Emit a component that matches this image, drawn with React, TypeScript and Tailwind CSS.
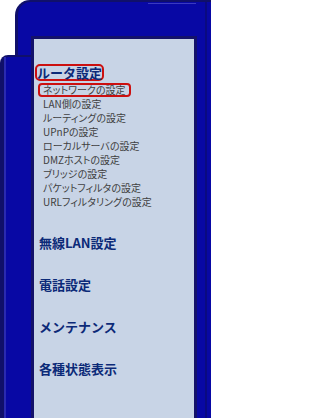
const subItems = [
  'ネットワークの設定',
  'LAN側の設定',
  'ルーティングの設定',
  'UPnPの設定',
  'ローカルサーバの設定',
  'DMZホストの設定',
  'ブリッジの設定',
  'パケットフィルタの設定',
  'URLフィルタリングの設定',
];

const sections = ['無線LAN設定', '電話設定', 'メンテナンス', '各種状態表示'];

const font = { fontFamily: '"Noto Sans CJK JP", "Noto Sans", sans-serif' };
const palt = { fontFeatureSettings: '"palt"' };

export default function App() {
  return (
    <div className="w-[211px] h-[418px] bg-white flex flex-col overflow-hidden" style={font}>
      {/* top frame */}
      <div className="flex h-[36px] shrink-0">
        <div className="w-[15px] bg-white" />
        <div className="flex-1 bg-[#0808a4] rounded-tl-[15px] border-l-[3px] border-t-[2px] border-[#10106a] relative">
          <div className="absolute top-[1px] left-[130px] w-[48px] h-px bg-[#3a3ac0]" />
          <div className="absolute top-0 right-[4px] w-[2px] h-full bg-[#0a0a80]" />
        </div>
      </div>

      <div className="flex flex-1">
        {/* left frame */}
        <div className="w-[31px] flex flex-col">
          <div className="flex h-[19px]">
            <div className="w-[15px] bg-white" />
            <div className="flex-1 bg-[#0808a4] border-l-[3px] border-[#10106a]" />
          </div>
          <div className="flex-1 bg-[#0808a4] rounded-tl-[8px] border-l-[4px] border-t-[2px] border-[#10106a] flex">
            <div className="w-[2px] bg-[#2a2ab0]" />
          </div>
        </div>

        {/* panel */}
        <div className="w-[166px] bg-[#c8d4e6] border-[3px] border-b-0 border-[#14126a] pt-[25px] flex flex-col items-start">
          <div className="ml-[1px] border-2 border-[#cc1010] rounded-[5px] px-0 h-[17px] leading-[13px] text-[13px] font-bold text-[#0c2a78]">
            ルータ設定
          </div>
          <div className="flex flex-col items-start mt-[2px]" style={palt}>
            {subItems.map((t, i) =>
              i === 0 ? (
                <div key={t} className="ml-[4px] border-2 border-[#cc1010] rounded-[4px] px-[3px] h-[14px] leading-[10px] text-[10px] text-[#404040]">
                  {t}
                </div>
              ) : (
                <div key={t} className="ml-[9px] h-[14px] leading-[14px] text-[10px] text-[#404040]">
                  {t}
                </div>
              )
            )}
          </div>
          <div className="flex flex-col mt-[24px] ml-[5px]">
            {sections.map((t) => (
              <div key={t} className="h-[42px] leading-[20px] text-[13px] font-bold text-[#0c2a78]">
                {t}
              </div>
            ))}
          </div>
        </div>

        {/* right frame */}
        <div className="w-[14px] bg-[#0808a4] flex">
          <div className="w-[8px]" />
          <div className="w-[2px] bg-[#0a0a80]" />
        </div>
      </div>
    </div>
  );
}
